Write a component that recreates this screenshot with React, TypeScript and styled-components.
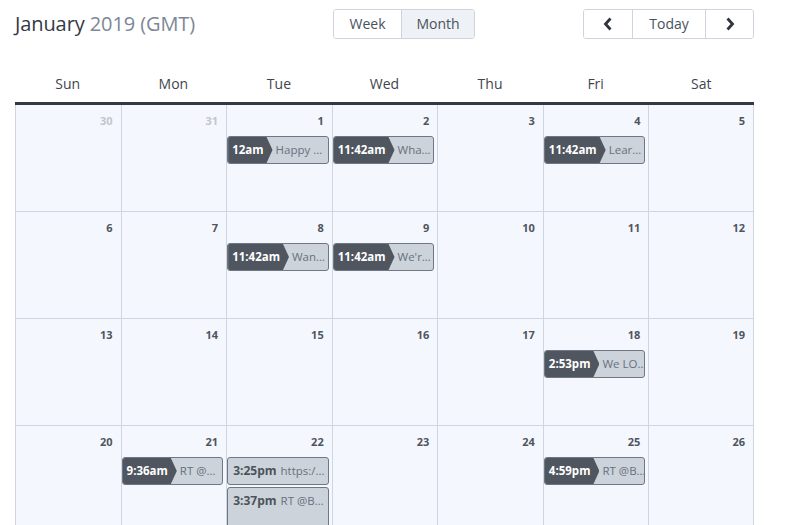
import React from "react";
import styled, { createGlobalStyle } from "styled-components";

const Global = createGlobalStyle`
  html, body { margin: 0; padding: 0; background: #fff; }
  body { font-family: "Open Sans", "Liberation Sans", sans-serif; overflow: hidden; }
`;

const Page = styled.div`
  padding: 8px 0 0 15px;
  width: 739px;
`;

const Toolbar = styled.div`
  display: flex;
  align-items: center;
  height: 31px;
`;

const Title = styled.h1`
  margin: 0;
  width: 318px;
  font-size: 20px;
  font-weight: 400;
  color: #333a44;
  line-height: 30px;
  white-space: nowrap;
  letter-spacing: -0.1px;
`;

const Muted = styled.span`
  color: #7d8796;
`;

const Group = styled.div`
  display: flex;
  border: 1px solid #cdd4de;
  border-radius: 3px;
  height: 28px;
  overflow: hidden;
`;

const Spacer = styled.div`
  flex: 1;
`;

const Btn = styled.button<{ $w: number; $active?: boolean }>`
  width: ${(p) => p.$w}px;
  height: 28px;
  border: none;
  border-left: 1px solid #cdd4de;
  &:first-child { border-left: none; }
  background: ${(p) => (p.$active ? "#eef1f5" : "#fff")};
  font-family: inherit;
  font-size: 14px;
  color: #4a5260;
  display: flex;
  align-items: center;
  justify-content: center;
  padding: 0;
`;

const Grid = styled.div`
  margin-top: 23px;
  display: grid;
  grid-template-columns: repeat(7, minmax(0, 1fr));
`;

const DayName = styled.div`
  height: 38px;
  padding-top: 2px;
  display: flex;
  align-items: center;
  justify-content: center;
  font-size: 14px;
  color: #3f454d;
  border-bottom: 3px solid #343a42;
`;

const Cell = styled.div`
  background: #f4f8fe;
  border-left: 1px solid #cfd6e0;
  border-bottom: 1px solid #cfd6e0;
  height: 106px;
  display: flex;
  flex-direction: column;
  gap: 2px;
  padding: 0 2px 0 0;
  min-width: 0;
  &:nth-child(7n) { border-right: 1px solid #cfd6e0; }
`;

const DateNum = styled.div<{ $other?: boolean }>`
  font-size: 11px;
  font-weight: 700;
  line-height: 12px;
  text-align: right;
  padding: 10px 6px 7px 0;
  color: ${(p) => (p.$other ? "#c2c6cc" : "#4f555d")};
`;

const Event = styled.div<{ $tall?: boolean }>`
  height: ${(p) => (p.$tall ? 60 : 26)}px;
  flex-shrink: 0;
  background: #ccd3db;
  border: 1px solid #6f7782;
  border-radius: 3px;
  display: flex;
  align-items: ${(p) => (p.$tall ? "flex-start" : "center")};
  font-size: 12px;
  line-height: 14px;
  overflow: hidden;
  white-space: nowrap;
  margin-right: 1px;
`;

const Label = styled.div`
  align-self: stretch;
  background: #50565f;
  color: #fff;
  font-weight: 700;
  font-size: 11.5px;
  display: flex;
  align-items: center;
  padding: 0 9px 0 4px;
  clip-path: polygon(0 0, calc(100% - 6px) 0, 100% 50%, calc(100% - 6px) 100%, 0 100%);
  margin-right: 3px;
`;

const Time = styled.span`
  font-weight: 700;
  color: #4d535b;
  margin-right: 4px;
`;

const Text = styled.span`
  color: #68717d;
  font-size: 11.5px;
`;

const Plain = styled.div<{ $tall?: boolean }>`
  padding: ${(p) => (p.$tall ? "6px 0 0 5px" : "0 0 0 5px")};
`;

type Ev = { time: string; text: string; label?: boolean; tall?: boolean };

const events: Record<string, Ev[]> = {
  "1": [{ time: "12am", text: "Happy …", label: true }],
  "2": [{ time: "11:42am", text: "Wha…", label: true }],
  "4": [{ time: "11:42am", text: "Lear…", label: true }],
  "8": [{ time: "11:42am", text: "Wan…", label: true }],
  "9": [{ time: "11:42am", text: "We'r…", label: true }],
  "18": [{ time: "2:53pm", text: "We LO…", label: true }],
  "21": [{ time: "9:36am", text: "RT @…", label: true }],
  "22": [
    { time: "3:25pm", text: "https:/…" },
    { time: "3:37pm", text: "RT @B…", tall: true },
  ],
  "25": [{ time: "4:59pm", text: "RT @B…", label: true }],
};

const days = ["Sun", "Mon", "Tue", "Wed", "Thu", "Fri", "Sat"];

const cells: { d: number; other?: boolean }[] = [
  { d: 30, other: true },
  { d: 31, other: true },
  ...Array.from({ length: 26 }, (_, i) => ({ d: i + 1 })),
];

export default function App() {
  return (
    <>
      <Global />
      <Page>
        <Toolbar>
          <Title>
            January <Muted>2019 (GMT)</Muted>
          </Title>
          <Group>
            <Btn $w={67}>Week</Btn>
            <Btn $w={73} $active>
              Month
            </Btn>
          </Group>
          <Spacer />
          <Group>
            <Btn $w={48} aria-label="Previous">
              <svg width="10" height="14" viewBox="0 0 10 14">
                <path d="M7.5 1.5 L2.5 7 L7.5 12.5" fill="none" stroke="#2f353d" strokeWidth="2.8" />
              </svg>
            </Btn>
            <Btn $w={73}>Today</Btn>
            <Btn $w={48} aria-label="Next">
              <svg width="10" height="14" viewBox="0 0 10 14">
                <path d="M2.5 1.5 L7.5 7 L2.5 12.5" fill="none" stroke="#2f353d" strokeWidth="2.8" />
              </svg>
            </Btn>
          </Group>
        </Toolbar>
        <Grid>
          {days.map((d) => (
            <DayName key={d}>{d}</DayName>
          ))}
          {cells.map((c, i) => {
            const evs = c.other ? [] : events[String(c.d)] || [];
            return (
              <Cell key={i}>
                <DateNum $other={c.other}>{c.d}</DateNum>
                {evs.map((e, j) => (
                  <Event key={j} $tall={e.tall}>
                    {e.label ? (
                      <>
                        <Label>{e.time}</Label>
                        <Text>{e.text}</Text>
                      </>
                    ) : (
                      <Plain $tall={e.tall}>
                        <Time>{e.time}</Time>
                        <Text>{e.text}</Text>
                      </Plain>
                    )}
                  </Event>
                ))}
              </Cell>
            );
          })}
        </Grid>
      </Page>
    </>
  );
}
